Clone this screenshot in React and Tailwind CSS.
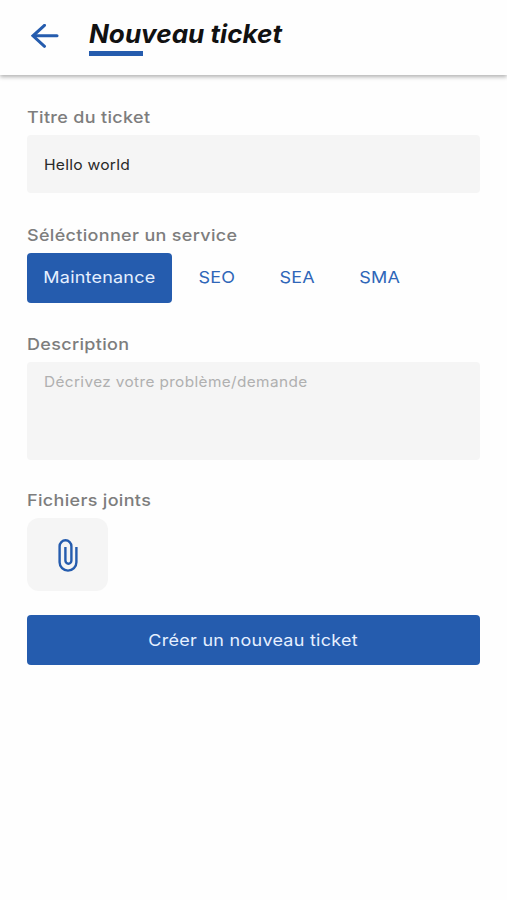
import React, { useState } from 'react';

const services = [
    { name: 'Maintenance', width: 'w-[144.5px]' },
    { name: 'SEO', width: 'w-[91px]' },
    { name: 'SEA', width: 'w-[70px]' },
    { name: 'SMA', width: 'w-[94px]' },
];

const BackIcon = () => (
    <svg className="w-7 h-6" viewBox="0 0 28 24" fill="none" stroke="#255cae" strokeWidth="3">
        <path d="M26 11.8H3" strokeLinecap="round" />
        <path d="M13.5 1.3L2 11.8L13.5 22.3" strokeLinecap="round" />
    </svg>
);

const ClipIcon = () => (
    <svg className="w-5 h-[34px]" viewBox="0 0 20 34" fill="none" stroke="#255cae" strokeWidth="2.4">
        <path d="M18.4 9V24.2a8.4 8.4 0 0 1-16.8 0V8.2a5.9 5.9 0 0 1 11.8 0V22.5a3 3.2 0 0 1-6 0V9" />
    </svg>
);

const Label = ({ children }) => (
    <label className="block h-6 leading-[23px] origin-left scale-x-[1.09] text-[16.5px] font-medium tracking-[0.3px] text-[#7d7d7d] whitespace-nowrap">
        {children}
    </label>
);

const App = () => {
    const [title, setTitle] = useState('Hello world');
    const [service, setService] = useState('Maintenance');
    const [description, setDescription] = useState('');

    return (
        <div className="min-h-[900px] bg-[#fefefe] font-['Inter','Liberation_Sans',sans-serif]">
            {/* Header */}
            <header className="flex h-[75px] bg-[#fefefe] pl-[31px] pt-5 shadow-[0_2px_4px_rgba(0,0,0,0.3)]">
                <button type="button" aria-label="Retour" className="mt-[3.5px] h-6">
                    <BackIcon />
                </button>
                <div className="ml-[30px]">
                    <h1 className="h-[31px] leading-[28px] origin-left scale-x-[1.043] text-[25px] font-bold italic text-[#111111] whitespace-nowrap">
                        Nouveau ticket
                    </h1>
                    <div className="w-[54px] h-[5px] bg-[#255cae]" />
                </div>
            </header>

            {/* Form */}
            <form className="px-[27px] pt-[31px]" onSubmit={(e) => e.preventDefault()}>
                <Label>Titre du ticket</Label>
                <div className="mt-[5px] h-[58px] px-[17px] rounded bg-[#f5f5f5]">
                    <input
                        type="text"
                        value={title}
                        onChange={(e) => setTitle(e.target.value)}
                        className="block w-[92%] h-full origin-left scale-x-[1.08] text-[14.5px] tracking-[0.2px] text-[#2a2a2a] focus:outline-none"
                    />
                </div>

                <div className="mt-[31px]">
                    <Label>Séléctionner un service</Label>
                    <div className="flex mt-[5px]">
                        {services.map((item) => (
                            <button
                                key={item.name}
                                type="button"
                                onClick={() => setService(item.name)}
                                className={`h-[49.5px] rounded text-[16.5px] tracking-[0.2px] ${item.width} ${service === item.name
                                    ? 'bg-[#255cae] text-[#e6f0ff]'
                                    : 'text-[#2f66b8]'
                                    }`}
                            >
                                <span className="inline-block scale-x-[1.09]">{item.name}</span>
                            </button>
                        ))}
                    </div>
                </div>

                <div className="mt-[30.5px]">
                    <Label>Description</Label>
                    <div className="mt-[5px] h-[97.5px] px-[17px] py-[9px] rounded bg-[#f5f5f5]">
                        <textarea
                            value={description}
                            onChange={(e) => setDescription(e.target.value)}
                            placeholder="Décrivez votre problème/demande"
                            className="block w-[92%] h-full origin-left scale-x-[1.06] resize-none text-[14.5px] leading-[22px] tracking-[0.35px] placeholder:text-[#b0b0b0] focus:outline-none"
                        />
                    </div>
                </div>

                <div className="mt-[29.5px]">
                    <Label>Fichiers joints</Label>
                    <button
                        type="button"
                        aria-label="Joindre un fichier"
                        className="flex mt-[5px] w-[81px] h-[73px] items-center justify-center rounded-xl bg-[#f5f5f5]"
                    >
                        <ClipIcon />
                    </button>
                </div>

                <button
                    type="submit"
                    className="block mt-6 w-full h-[50px] rounded bg-[#255cae] text-[16.5px] tracking-[0.25px] text-[#e6f0ff]"
                >
                    <span className="inline-block scale-x-[1.09]">Créer un nouveau ticket</span>
                </button>
            </form>
        </div>
    );
};

export default App;
